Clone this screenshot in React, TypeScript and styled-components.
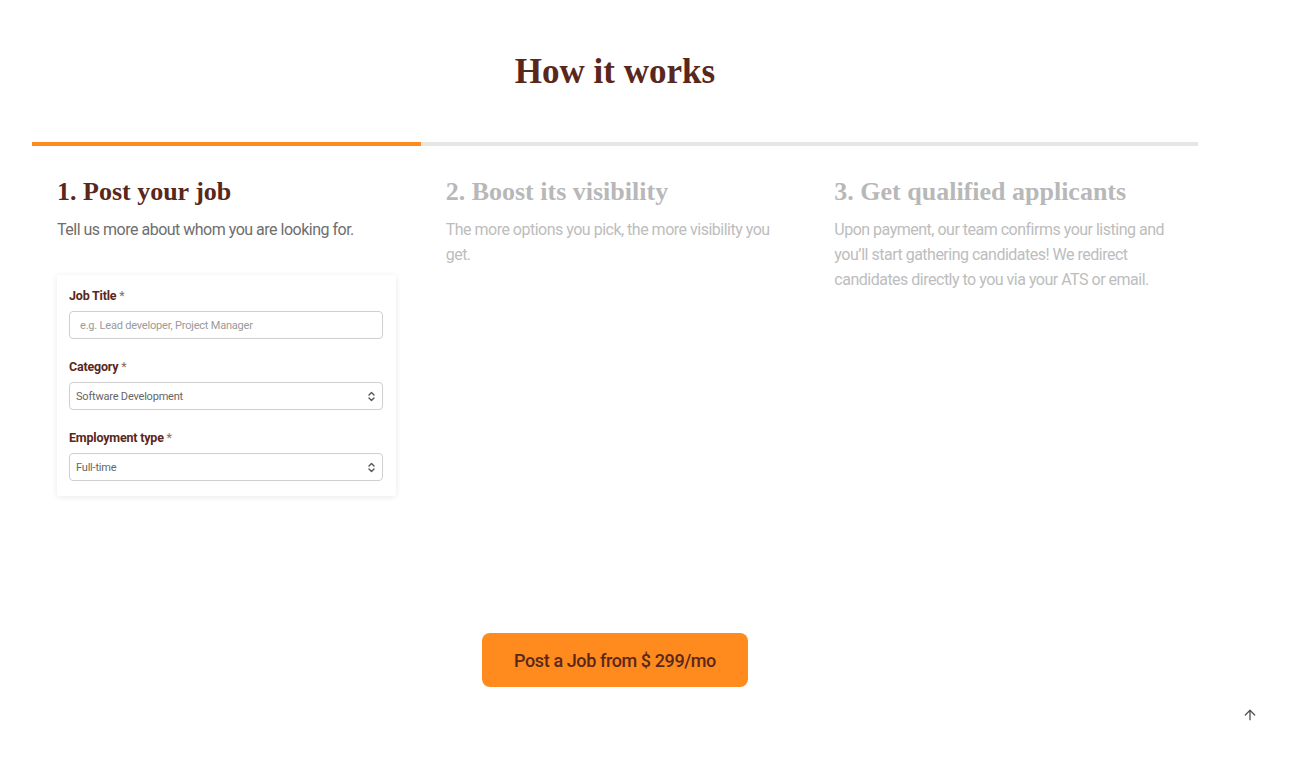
import React from "react";
import styled, { createGlobalStyle } from "styled-components";
import { ArrowUp } from "lucide-react";

const Global = createGlobalStyle`
  html, body { margin: 0; padding: 0; background: #ffffff; }
  body { font-family: Roboto, "Noto Sans", Arial, sans-serif; }
  * { box-sizing: border-box; }
`;

const Page = styled.div`
  width: 1292px;
  padding: 50px 94px 0 32px;
  display: flex;
  flex-direction: column;
`;

const Title = styled.h2`
  margin: 0;
  text-align: center;
  font-family: "Liberation Serif", "DejaVu Serif", serif;
  font-weight: 700;
  font-size: 35px;
  line-height: 44px;
  color: #5a271c;
`;

const Progress = styled.div`
  margin-top: 48px;
  height: 4px;
  background: #e6e6e6;
  display: flex;
`;

const ProgressFill = styled.div`
  height: 100%;
  background: #ff8a1d;
`;

const Steps = styled.div`
  margin-top: 30px;
  display: grid;
  grid-template-columns: repeat(3, 1fr);
`;

const Step = styled.div`
  padding: 0 24px 0 25px;
  display: flex;
  flex-direction: column;
  align-items: flex-start;
`;

const StepTitle = styled.h3<{ $active?: boolean }>`
  margin: 0;
  font-family: "Liberation Serif", "DejaVu Serif", serif;
  font-weight: 700;
  font-size: 26px;
  line-height: 32px;
  color: ${(p) => (p.$active ? "#5a271c" : "#b8b8b8")};
`;

const StepText = styled.p<{ $active?: boolean }>`
  margin: 9px 0 0;
  font-size: 16px;
  line-height: 25px;
  letter-spacing: -0.5px;
  color: ${(p) => (p.$active ? "#6e6e6e" : "#bdbdbd")};
`;

const Card = styled.div`
  margin-top: 33px;
  width: 339px;
  padding: 12px 13px 15px 12px;
  background: #fff;
  box-shadow: 0 1px 6px rgba(0, 0, 0, 0.09);
  border-radius: 2px;
  display: flex;
  flex-direction: column;
`;

const Field = styled.div<{ $first?: boolean }>`
  margin-top: ${(p) => (p.$first ? 0 : 19)}px;
  display: flex;
  flex-direction: column;
  gap: 6px;
`;

const Label = styled.label`
  font-size: 12.5px;
  line-height: 18px;
  font-weight: 700;
  color: #5a271c;
  letter-spacing: -0.2px;
`;

const Req = styled.span`
  color: #8a6a64;
  font-weight: 400;
`;

const Box = styled.div`
  height: 28px;
  border: 1px solid #cfcfcf;
  border-radius: 4px;
  display: flex;
  align-items: center;
  justify-content: space-between;
  padding: 0 6px 0 6px;
  font-size: 11px;
  color: #666;
  letter-spacing: -0.2px;
`;

const Placeholder = styled.span`
  padding-left: 4px;
  color: #9a9a9a;
`;

const Chevrons = () => (
  <svg width="9" height="11" viewBox="0 0 9 11" fill="none" stroke="#555" strokeWidth="1.4" strokeLinecap="round" strokeLinejoin="round">
    <path d="M2 4 L4.5 1.5 L7 4" />
    <path d="M2 7 L4.5 9.5 L7 7" />
  </svg>
);

const CtaRow = styled.div`
  margin-top: 137px;
  display: flex;
  justify-content: center;
`;

const Cta = styled.button`
  width: 266px;
  height: 54px;
  border: none;
  border-radius: 8px;
  background: #ff8a1d;
  color: #5a271c;
  font-family: Roboto, "Noto Sans", sans-serif;
  font-size: 18px;
  font-weight: 500;
  letter-spacing: -0.4px;
  cursor: pointer;
`;

const TopButton = styled.div`
  position: fixed;
  left: 1242px;
  top: 707px;
  width: 16px;
  height: 16px;
  color: #555;
  display: flex;
`;

export default function App() {
  return (
    <>
      <Global />
      <Page>
        <Title>How it works</Title>
        <Progress>
          <ProgressFill style={{ width: "33.33%" }} />
        </Progress>
        <Steps>
          <Step>
            <StepTitle $active>1. Post your job</StepTitle>
            <StepText $active>Tell us more about whom you are looking for.</StepText>
            <Card>
              <Field $first>
                <Label>
                  Job Title <Req>*</Req>
                </Label>
                <Box>
                  <Placeholder>e.g. Lead developer, Project Manager</Placeholder>
                </Box>
              </Field>
              <Field>
                <Label>
                  Category <Req>*</Req>
                </Label>
                <Box>
                  <span>Software Development</span>
                  <Chevrons />
                </Box>
              </Field>
              <Field>
                <Label>
                  Employment type <Req>*</Req>
                </Label>
                <Box>
                  <span>Full-time</span>
                  <Chevrons />
                </Box>
              </Field>
            </Card>
          </Step>
          <Step>
            <StepTitle>2. Boost its visibility</StepTitle>
            <StepText>The more options you pick, the more visibility you get.</StepText>
          </Step>
          <Step>
            <StepTitle>3. Get qualified applicants</StepTitle>
            <StepText>
              Upon payment, our team confirms your listing and you’ll start gathering candidates! We redirect
              candidates directly to you via your ATS or email.
            </StepText>
          </Step>
        </Steps>
        <CtaRow>
          <Cta>Post a Job from $ 299/mo</Cta>
        </CtaRow>
      </Page>
      <TopButton>
        <ArrowUp size={16} strokeWidth={2} />
      </TopButton>
    </>
  );
}
